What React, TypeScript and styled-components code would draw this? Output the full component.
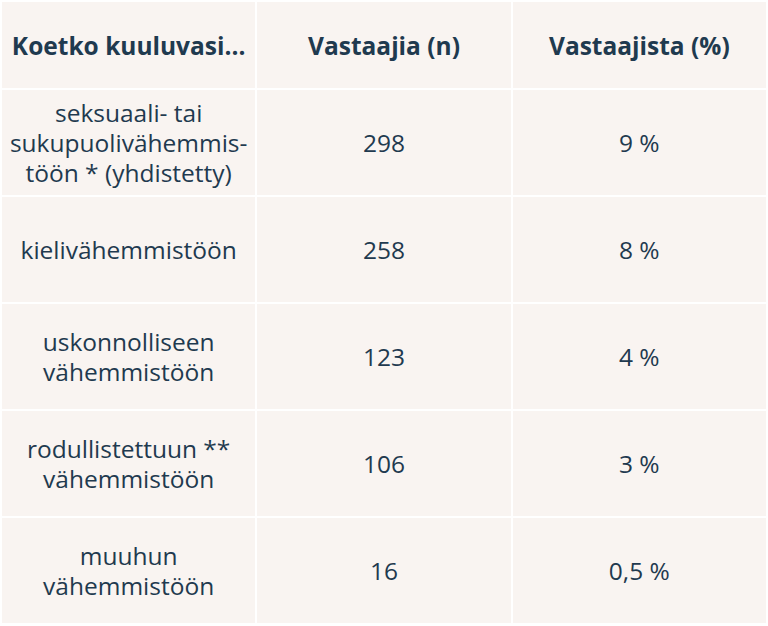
import React from "react";
import styled, { createGlobalStyle } from "styled-components";

const rows = [
  { lines: ["seksuaali- tai", "sukupuolivähemmis-", "töön * (yhdistetty)"], n: "298", pct: "9 %" },
  { lines: ["kielivähemmistöön"], n: "258", pct: "8 %" },
  { lines: ["uskonnolliseen", "vähemmistöön"], n: "123", pct: "4 %" },
  { lines: ["rodullistettuun **", "vähemmistöön"], n: "106", pct: "3 %" },
  { lines: ["muuhun", "vähemmistöön"], n: "16", pct: "0,5 %" },
];

export default function App() {
  return (
    <>
      <GlobalStyle />
      <Table>
        <thead>
          <tr>
            <HeadCell>Koetko kuuluvasi...</HeadCell>
            <HeadCell>Vastaajia (n)</HeadCell>
            <HeadCell>Vastaajista (%)</HeadCell>
          </tr>
        </thead>
        <tbody>
          {rows.map((r) => (
            <tr key={r.n}>
              <Cell>
                {r.lines.map((l) => (
                  <Line key={l}>{l}</Line>
                ))}
              </Cell>
              <Cell>{r.n}</Cell>
              <Cell>{r.pct}</Cell>
            </tr>
          ))}
        </tbody>
      </Table>
    </>
  );
}

const GlobalStyle = createGlobalStyle`
  body {
    margin: 0;
    background: #ffffff;
    font-family: "Open Sans", "Noto Sans", sans-serif;
  }
`;

const Table = styled.table`
  width: 768px;
  border-collapse: separate;
  border-spacing: 2px;
  table-layout: fixed;
  color: #1f3a4f;
`;

const HeadCell = styled.th`
  height: 86px;
  padding: 0;
  background: #f9f4f1;
  font-size: 24.5px;
  font-weight: 700;
  text-align: center;
  vertical-align: middle;
`;

const Cell = styled.td`
  height: 105px;
  padding: 0;
  background: #f9f4f1;
  font-size: 24.5px;
  line-height: 30px;
  text-align: center;
  vertical-align: middle;
`;

const Line = styled.div`
  white-space: nowrap;
`;
